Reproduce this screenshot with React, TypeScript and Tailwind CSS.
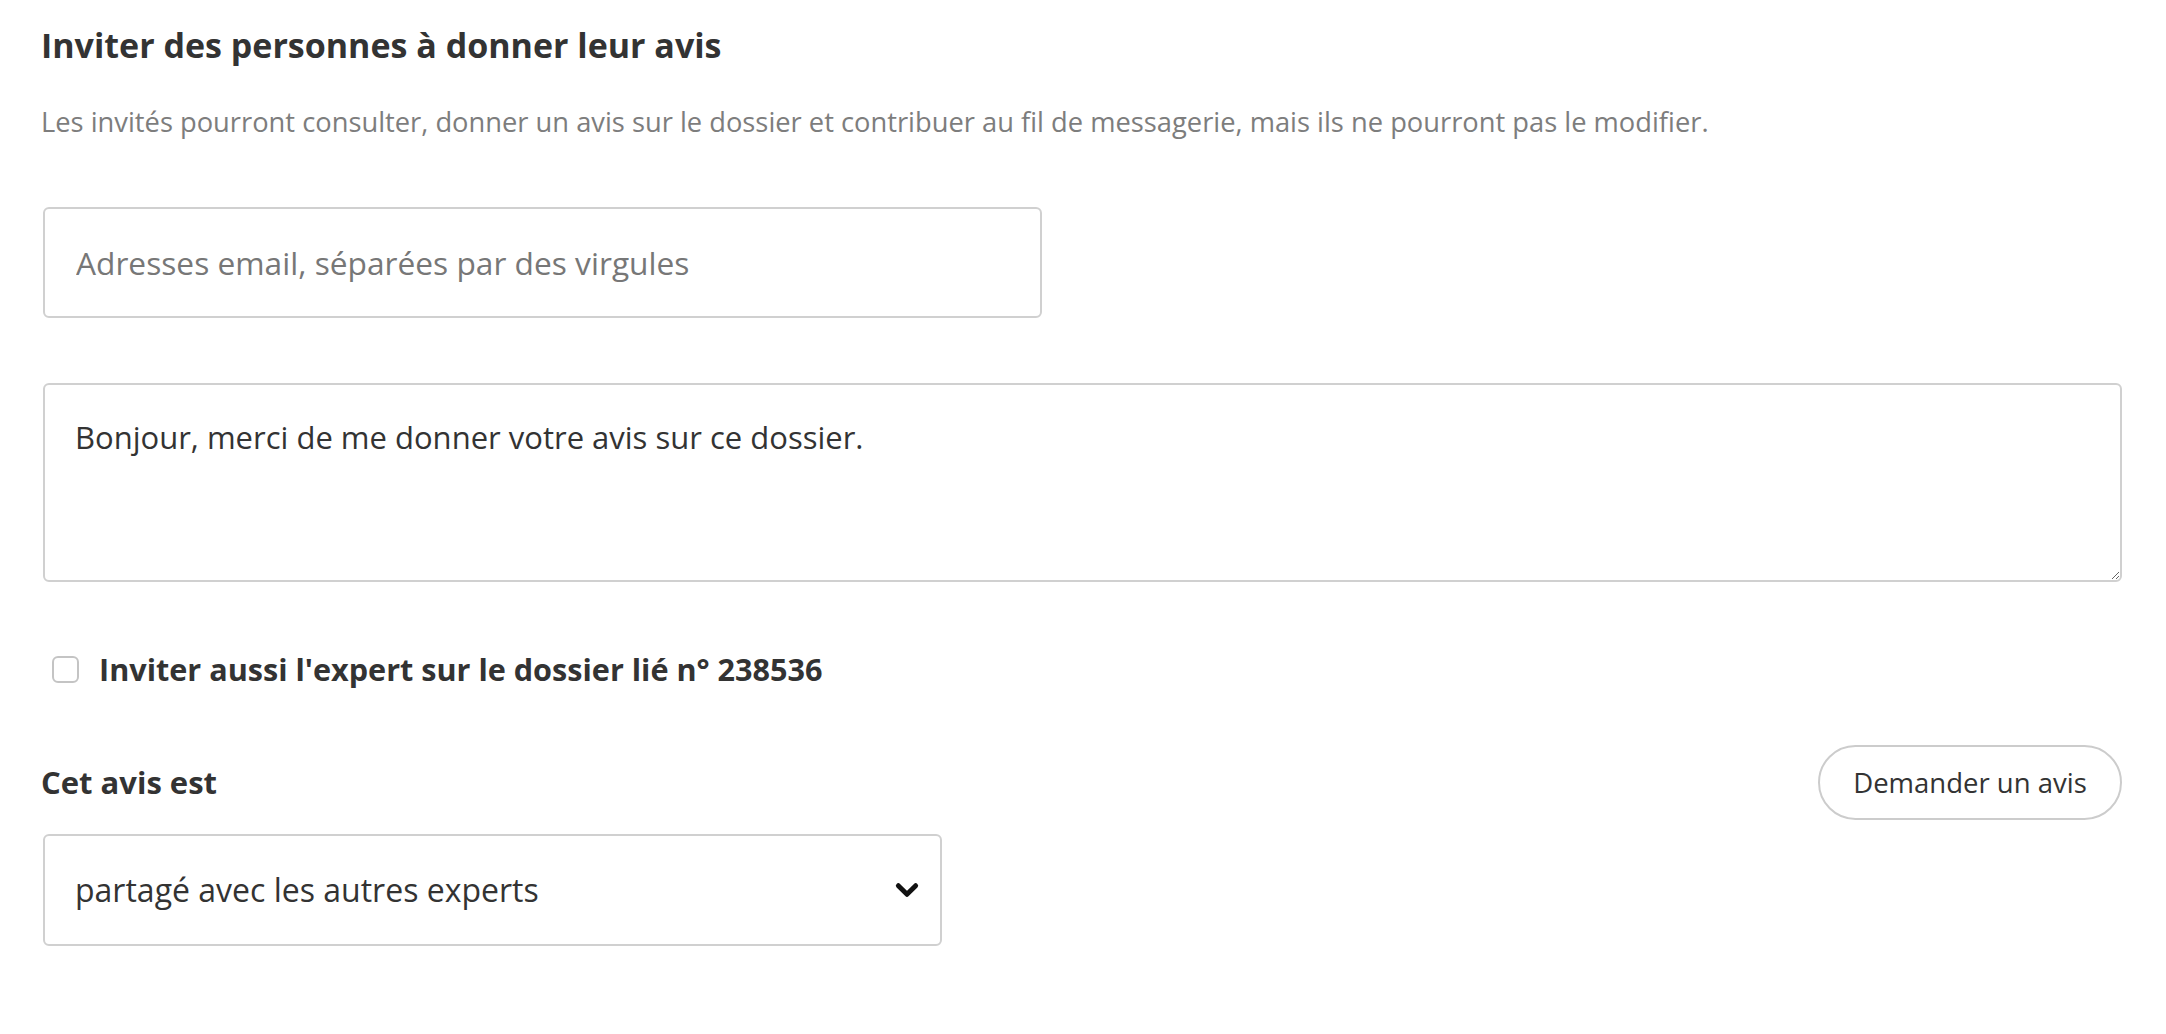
import React from "react";

export default function App() {
  return (
    <div className="w-full min-h-screen bg-white font-['Open_Sans',sans-serif] text-[#333333]">
      <main className="flex flex-col px-[41px] pb-10">
        <h2 className="mt-[25px] text-[34px] leading-[40px] font-bold">
          Inviter des personnes à donner leur avis
        </h2>
        <p className="mt-[41px] text-[27.3px] leading-[32px] text-[#7d7d7d]">
          Les invités pourront consulter, donner un avis sur le dossier et
          contribuer au fil de messagerie, mais ils ne pourront pas le modifier.
        </p>

        <input
          type="text"
          placeholder="Adresses email, séparées par des virgules"
          className="mt-[69px] ml-[2px] w-[999px] h-[111px] px-[31px] text-[31.7px] border-2 border-[#d0d0d0] rounded-[6px] placeholder:text-[#777777] outline-none"
        />

        <textarea
          defaultValue="Bonjour, merci de me donner votre avis sur ce dossier."
          className="mt-[65px] ml-[2px] mr-[3px] h-[199px] px-[30px] pt-[34px] text-[31px] leading-[36px] text-[#333333] border-2 border-[#d0d0d0] rounded-[6px] outline-none"
        />

        <label className="mt-[71px] flex items-center h-[32px] gap-5 pl-[11px]">
          <input
            type="checkbox"
            className="appearance-none w-[27px] h-[27px] border-2 border-[#c4c4c4] rounded-[6px] bg-white shrink-0"
          />
          <span className="text-[30.6px] leading-[32px] font-bold">
            Inviter aussi l'expert sur le dossier lié n° 238536
          </span>
        </label>

        <div className="mt-[60px] flex items-center justify-between h-[75px]">
          <span className="text-[31px] font-bold">Cet avis est</span>
          <button
            type="button"
            className="mr-[3px] h-[75px] w-[304px] rounded-full border-2 border-[#cccccc] text-[27.5px] text-[#333333] bg-white"
          >
            Demander un avis
          </button>
        </div>

        <div className="relative mt-[14px] ml-[2px] w-[899px]">
          <select className="appearance-none w-full h-[112px] px-[30px] text-[32px] text-[#333333] border-2 border-[#d0d0d0] rounded-[6px] bg-white outline-none">
            <option>partagé avec les autres experts</option>
            <option>confidentiel</option>
          </select>
          <svg
            className="absolute right-[22px] top-1/2 -translate-y-1/2 w-[26px] h-[26px] pointer-events-none"
            viewBox="0 0 24 24"
            fill="none"
            stroke="#111111"
            strokeWidth="4.5"
            strokeLinecap="round"
            strokeLinejoin="round"
          >
            <path d="M4 8l8 8 8-8" />
          </svg>
        </div>
      </main>
    </div>
  );
}
